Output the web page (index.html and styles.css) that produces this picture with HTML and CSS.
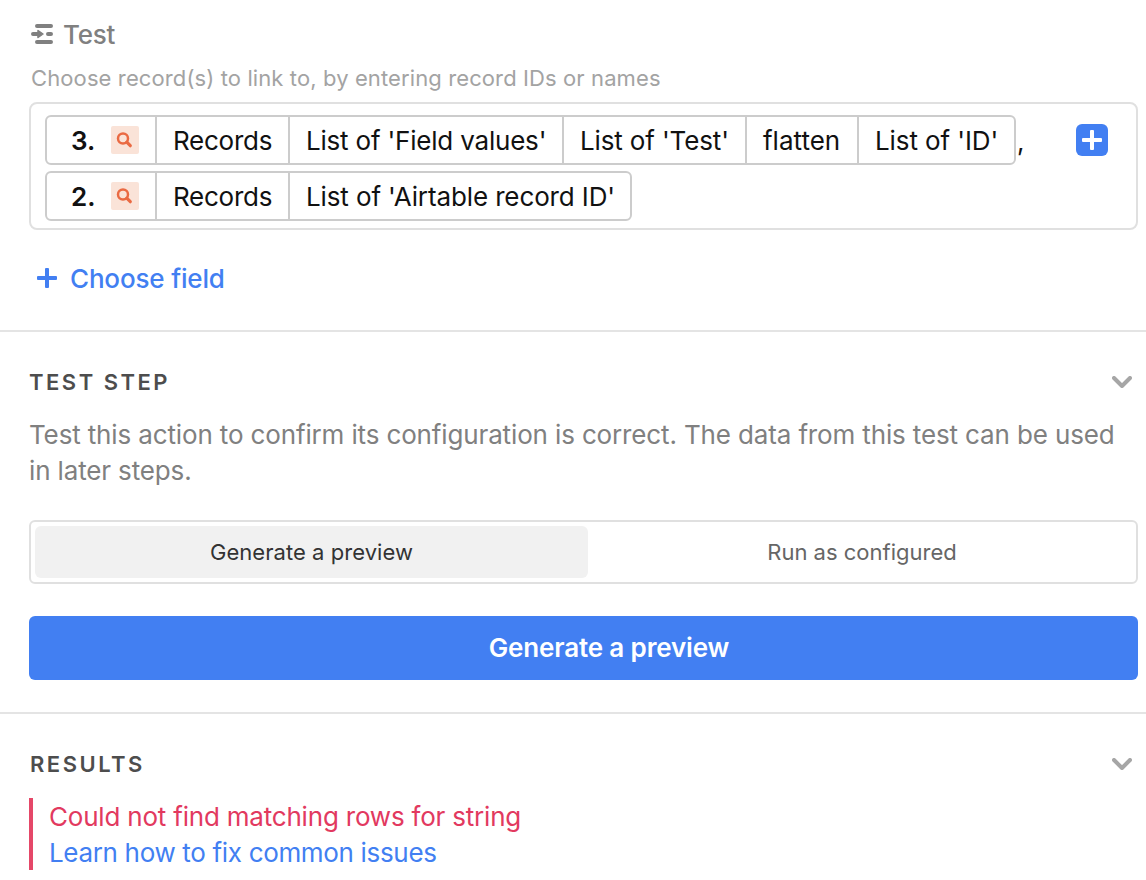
FILE: index.html
```html
<!DOCTYPE html>
<html lang="en">
<head>
  <meta charset="UTF-8" />
  <meta name="viewport" content="width=device-width, initial-scale=1.0"/>
  <title>Test step</title>
  <link rel="stylesheet" href="styles.css">
</head>
<body>
  <!-- Field being configured -->
  <section class="section field-section">
    <div class="field-label">
      <svg class="link-icon" width="24" height="22" viewBox="0 0 24 22" fill="none" stroke="currentColor" stroke-width="4" stroke-linecap="round">
        <path d="M6 3h14M6 19h14M2 11h6M17 11h3"/>
        <path d="M7 7.500l5 3.500-5 3.500z" fill="currentColor" stroke-width="1.500" stroke-linejoin="round"/>
      </svg>
      <span>Test</span>
    </div>
    <p class="hint">Choose record(s) to link to, by entering record IDs or names</p>

    <div class="token-input">
      <div class="token-rows">
        <div class="token-row">
          <div class="token">
            <span class="cell step">
              <b>3.</b>
              <svg class="search-icon" width="28" height="28" viewBox="0 0 28 28" fill="none" stroke="#ea6a43">
                <rect width="28" height="28" rx="2" fill="#fae3d8" stroke="none"/>
                <circle cx="12" cy="12.500" r="5" stroke-width="2.500"/>
                <path d="M15.800 16.200l3.500 3.500" stroke-width="3.200" stroke-linecap="round"/>
              </svg>
            </span>
            <span class="cell records">Records</span>
            <span class="cell field-values">List of 'Field values'</span>
            <span class="cell test">List of 'Test'</span>
            <span class="cell flatten">flatten</span>
            <span class="cell id">List of 'ID'</span>
          </div>
          <span class="comma">,</span>
        </div>
        <div class="token-row">
          <div class="token">
            <span class="cell step">
              <b>2.</b>
              <svg class="search-icon" width="28" height="28" viewBox="0 0 28 28" fill="none" stroke="#ea6a43">
                <rect width="28" height="28" rx="2" fill="#fae3d8" stroke="none"/>
                <circle cx="12" cy="12.500" r="5" stroke-width="2.500"/>
                <path d="M15.800 16.200l3.500 3.500" stroke-width="3.200" stroke-linecap="round"/>
              </svg>
            </span>
            <span class="cell records">Records</span>
            <span class="cell record-id">List of 'Airtable record ID'</span>
          </div>
        </div>
      </div>
      <button class="insert-btn" aria-label="Insert">
        <svg width="32" height="32" viewBox="0 0 32 32" fill="#fff">
          <rect x="14" y="6" width="4" height="20" rx="1"/>
          <rect x="6" y="14" width="20" height="4" rx="1"/>
        </svg>
      </button>
    </div>

    <button class="choose-field">
      <svg width="20" height="20" viewBox="0 0 20 20" fill="currentColor">
        <rect x="8" y="0" width="4" height="20" rx="1"/>
        <rect x="0" y="8" width="20" height="4" rx="1"/>
      </svg>
      <span>Choose field</span>
    </button>
  </section>

  <!-- Test step -->
  <section class="section test-section">
    <div class="section-header">
      <h2>TEST STEP</h2>
      <svg class="chevron" width="20" height="12" viewBox="0 0 20 12">
        <path d="M2 2l8 8 8-8"/>
      </svg>
    </div>
    <p class="description">Test this action to confirm its configuration is correct. The data from this test can be used in later steps.</p>

    <div class="tabs">
      <button class="tab active">Generate a preview</button>
      <button class="tab">Run as configured</button>
    </div>

    <button class="primary-btn">Generate a preview</button>
  </section>

  <!-- Results -->
  <section class="section results-section">
    <div class="section-header">
      <h2>RESULTS</h2>
      <svg class="chevron" width="20" height="12" viewBox="0 0 20 12">
        <path d="M2 2l8 8 8-8"/>
      </svg>
    </div>
    <div class="error-block">
      <p class="error">Could not find matching rows for string</p>
      <a href="#">Learn how to fix common issues</a>
    </div>
  </section>
</body>
</html>
```
FILE: styles.css
```css
* {
  box-sizing: border-box;
}

body {
  margin: 0;
  height: 880px;
  overflow: hidden;
  background: #fff;
  color: #111;
  font-family: Inter, 'Liberation Sans', sans-serif;
  font-size: 26px;
  line-height: 36px;
}

p, h2 {
  margin: 0;
}

button {
  padding: 0;
  border: none;
  background: none;
  font: inherit;
  cursor: pointer;
}

svg {
  display: block;
  flex-shrink: 0;
}

.section {
  padding: 0 8px 0 29px;
}

.field-section {
  height: 330px;
  padding-top: 17px;
}

.field-label {
  display: flex;
  align-items: center;
  gap: 8px;
  padding-left: 2px;
  color: #808080;
  font-weight: 500;
  letter-spacing: -0.2px;
}

.link-icon {
  margin-top: -2px;
}

.hint {
  margin-top: 9px;
  padding-left: 2px;
  font-size: 22px;
  line-height: 32px;
  letter-spacing: 0.11px;
  color: #a3a3a3;
}

.token-input {
  display: flex;
  align-items: flex-start;
  justify-content: space-between;
  height: 128px;
  margin-top: 8px;
  padding: 11px 28px 0 14px;
  border: 2px solid #e0e0e0;
  border-radius: 8px;
}

.token-rows {
  display: flex;
  flex-direction: column;
  gap: 6px;
}

.token-row {
  display: flex;
}

.token {
  display: flex;
  height: 50px;
  border: 2px solid #ccc;
  border-radius: 6px;
}

.cell {
  display: flex;
  align-items: center;
  padding: 2px 0 0 16px;
  white-space: nowrap;
}

.cell + .cell {
  border-left: 2px solid #ccc;
}

.step {
  justify-content: space-between;
  width: 108px;
  padding-right: 16px;
  padding-left: 24px;
}

.step b {
  font-weight: 600;
}

.records {
  width: 133px;
  letter-spacing: -0.25px;
}

.field-values {
  width: 274px;
  letter-spacing: -0.2px;
}

.test {
  width: 183px;
  letter-spacing: -0.14px;
}

.flatten {
  width: 112px;
}

.id {
  width: 157px;
  letter-spacing: -0.1px;
}

.record-id {
  width: 342px;
  letter-spacing: -0.12px;
}

.search-icon {
  margin-top: -2px;
}

.comma {
  padding: 9px 0 0 1px;
}

.insert-btn {
  margin-top: 9px;
  border-radius: 6px;
  background: #427ff2;
}

.choose-field {
  display: flex;
  align-items: center;
  gap: 13px;
  margin: 31px 0 0 8px;
  color: #427ff2;
  font-weight: 500;
  letter-spacing: -0.17px;
}

.choose-field svg {
  margin-top: -2px;
}

.test-section {
  height: 382px;
  padding-top: 34px;
  border-top: 2px solid #e4e4e4;
}

.section-header {
  display: flex;
  align-items: center;
  justify-content: space-between;
  height: 32px;
  padding-right: 6px;
}

h2 {
  font-size: 22px;
  font-weight: 600;
  letter-spacing: 2.5px;
  color: #4d4d4d;
}

.results-section h2 {
  padding-left: 1px;
}

.chevron path {
  fill: none;
  stroke: #a6a6a6;
  stroke-width: 4;
  stroke-linecap: round;
  stroke-linejoin: round;
}

.description {
  margin-top: 19px;
  letter-spacing: -0.14px;
  color: #808080;
}

.tabs {
  display: flex;
  height: 64px;
  margin-top: 31px;
  padding: 4px 0 4px 4px;
  border: 2px solid #e0e0e0;
  border-radius: 6px;
}

.tab {
  flex: 1;
  border-radius: 6px;
  font-size: 22px;
  letter-spacing: 0;
  color: #666;
}

.tab.active {
  flex: 0 0 553px;
  letter-spacing: 0.05px;
  background: #f1f1f1;
  color: #333;
}

.primary-btn {
  width: 100%;
  height: 64px;
  margin-top: 32px;
  padding-left: 51px;
  border-radius: 6px;
  background: #427ff2;
  color: #fff;
  font-weight: 600;
  letter-spacing: -0.15px;
}

.results-section {
  padding-top: 34px;
  border-top: 2px solid #e4e4e4;
}

.error-block {
  height: 72px;
  margin-top: 18px;
  padding: 1px 0 0 16px;
  border-left: 4px solid #e54768;
}

.error {
  letter-spacing: -0.2px;
  color: #e2395f;
}

.error-block a {
  display: block;
  letter-spacing: -0.33px;
  color: #427ff2;
  text-decoration: none;
}
```
